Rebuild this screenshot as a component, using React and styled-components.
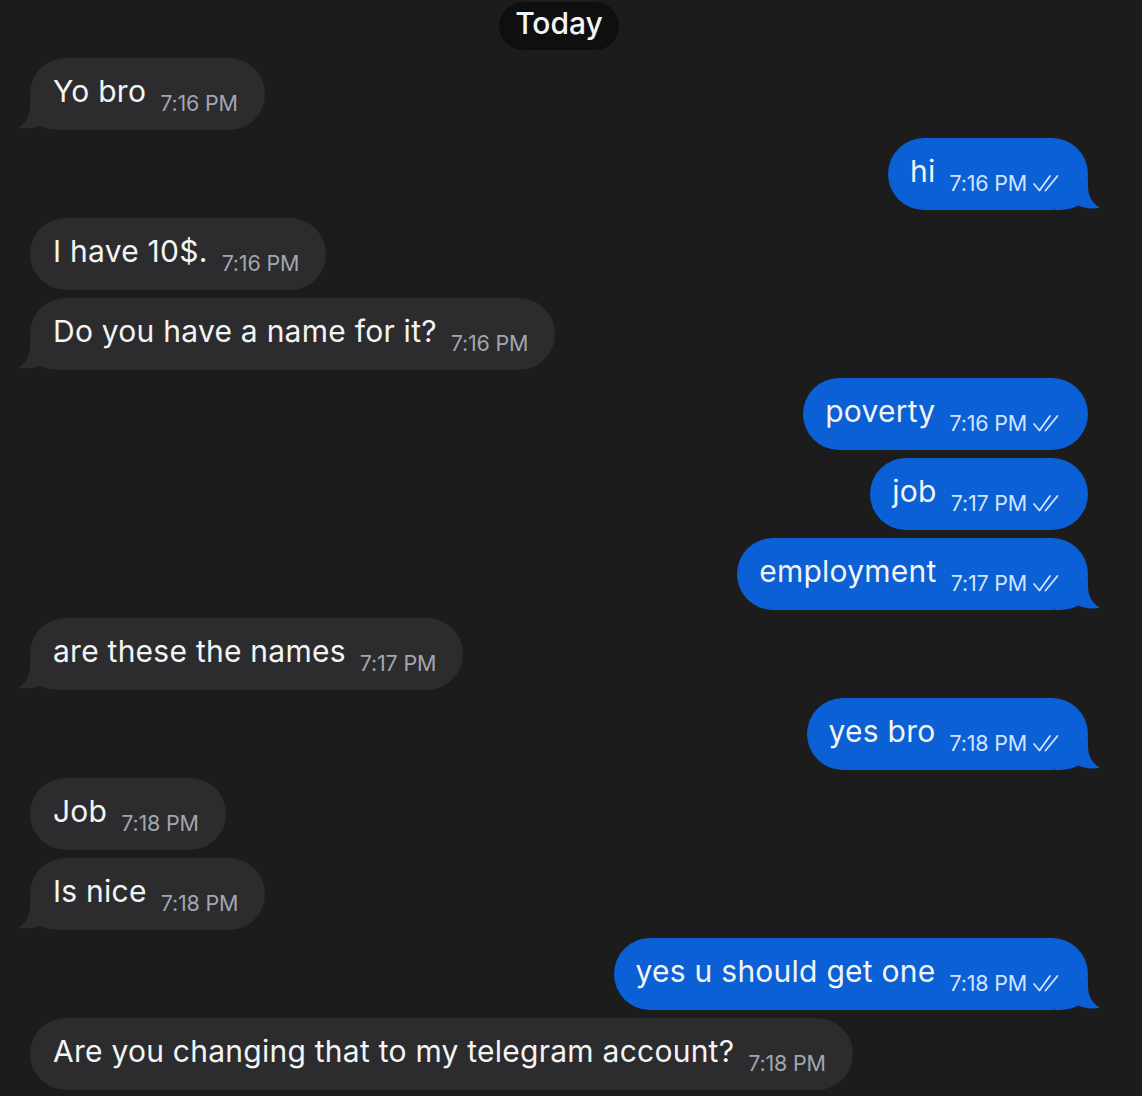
import styled, { createGlobalStyle } from 'styled-components';

const GlobalStyle = createGlobalStyle`
  html, body {
    margin: 0;
    background: #1c1c1d;
  }
  body {
    font-family: Inter, "Noto Sans", sans-serif;
    -webkit-font-smoothing: antialiased;
  }
`;

// 채팅 데이터
const messages = [
  { out: false, text: 'Yo bro', time: '7:16 PM', tail: true },
  { out: true, text: 'hi', time: '7:16 PM', tail: true },
  { out: false, text: 'I have 10$.', time: '7:16 PM' },
  { out: false, text: 'Do you have a name for it?', time: '7:16 PM', tail: true },
  { out: true, text: 'poverty', time: '7:16 PM' },
  { out: true, text: 'job', time: '7:17 PM' },
  { out: true, text: 'employment', time: '7:17 PM', tail: true },
  { out: false, text: 'are these the names', time: '7:17 PM', tail: true },
  { out: true, text: 'yes bro', time: '7:18 PM', tail: true },
  { out: false, text: 'Job', time: '7:18 PM' },
  { out: false, text: 'Is nice', time: '7:18 PM', tail: true },
  { out: true, text: 'yes u should get one', time: '7:18 PM', tail: true },
  { out: false, text: 'Are you changing that to my telegram account?', time: '7:18 PM' },
];

const ReadChecks = () => (
  <CheckIcon viewBox="0 0 30 20" fill="none">
    <path
      d="M2 11 L7.5 17.5 L18 3"
      stroke="currentColor"
      strokeWidth="1.8"
      strokeLinecap="round"
      strokeLinejoin="round"
    />
    <path
      d="M13.5 17.5 L25.5 3"
      stroke="currentColor"
      strokeWidth="1.8"
      strokeLinecap="round"
    />
  </CheckIcon>
);

// 말풍선 꼬리
const Tail = ({ out }) => (
  <TailIcon $out={out} viewBox="0 0 44 32">
    <path d="M12 0 L44 0 L44 32 C34 32 27 30.5 22 27.5 C16 30.5 8 31 0 30 C6 26 12 20 12 8 Z" />
  </TailIcon>
);

const App = () => {
  return (
    <>
      <GlobalStyle />
      <ChatContainer>
        <DateRow>
          <DatePill>Today</DatePill>
        </DateRow>
        {messages.map((msg, i) => (
          <Row key={i} $out={msg.out}>
            <Bubble $out={msg.out}>
              {msg.tail && <Tail out={msg.out} />}
              <MessageText>{msg.text}</MessageText>
              <Meta $out={msg.out}>
                {msg.time}
                {msg.out && <ReadChecks />}
              </Meta>
            </Bubble>
          </Row>
        ))}
      </ChatContainer>
    </>
  );
};

export default App;

const ChatContainer = styled.main`
  display: flex;
  flex-direction: column;
  gap: 8px;
  padding: 2px 54px 0 30px;
  min-height: 1096px;
  box-sizing: border-box;
  background: #1c1c1d;
  overflow: hidden;
`;

const DateRow = styled.div`
  display: flex;
  justify-content: center;
`;

const DatePill = styled.div`
  height: 48px;
  line-height: 42px;
  padding: 0 16px;
  border-radius: 24px;
  background: #0f0f0f;
  color: #f5f5f5;
  font-size: 30px;
  font-weight: 500;
`;

const Row = styled.div`
  display: flex;
  justify-content: ${({ $out }) => ($out ? 'flex-end' : 'flex-start')};
`;

const Bubble = styled.div`
  position: relative;
  display: flex;
  align-items: baseline;
  gap: 14px;
  height: 72px;
  box-sizing: border-box;
  padding: 0 ${({ $out }) => ($out ? '26px 0 22px' : '27px 0 23px')};
  border-radius: 36px;
  background: ${({ $out }) => ($out ? '#0a60d4' : '#2c2c2e')};
`;

const MessageText = styled.span`
  position: relative;
  z-index: 1;
  top: -3px;
  color: #f4f4f4;
  font-size: 30px;
  line-height: 72px;
  letter-spacing: 0.25px;
`;

const Meta = styled.span`
  position: relative;
  z-index: 1;
  top: 6px;
  display: flex;
  align-items: baseline;
  gap: 5px;
  font-size: 21.5px;
  letter-spacing: -0.2px;
  color: ${({ $out }) => ($out ? '#d3e4ff' : '#a2a6ae')};
  white-space: nowrap;
`;

const CheckIcon = styled.svg`
  width: 30px;
  height: 20px;
  position: relative;
  top: 2px;
`;

const TailIcon = styled.svg`
  position: absolute;
  bottom: 0;
  width: 44px;
  height: 32px;
  ${({ $out }) => ($out ? 'right: -12px; transform: scaleX(-1);' : 'left: -12px;')}
  fill: ${({ $out }) => ($out ? '#0a60d4' : '#2c2c2e')};
  z-index: 0;
`;
